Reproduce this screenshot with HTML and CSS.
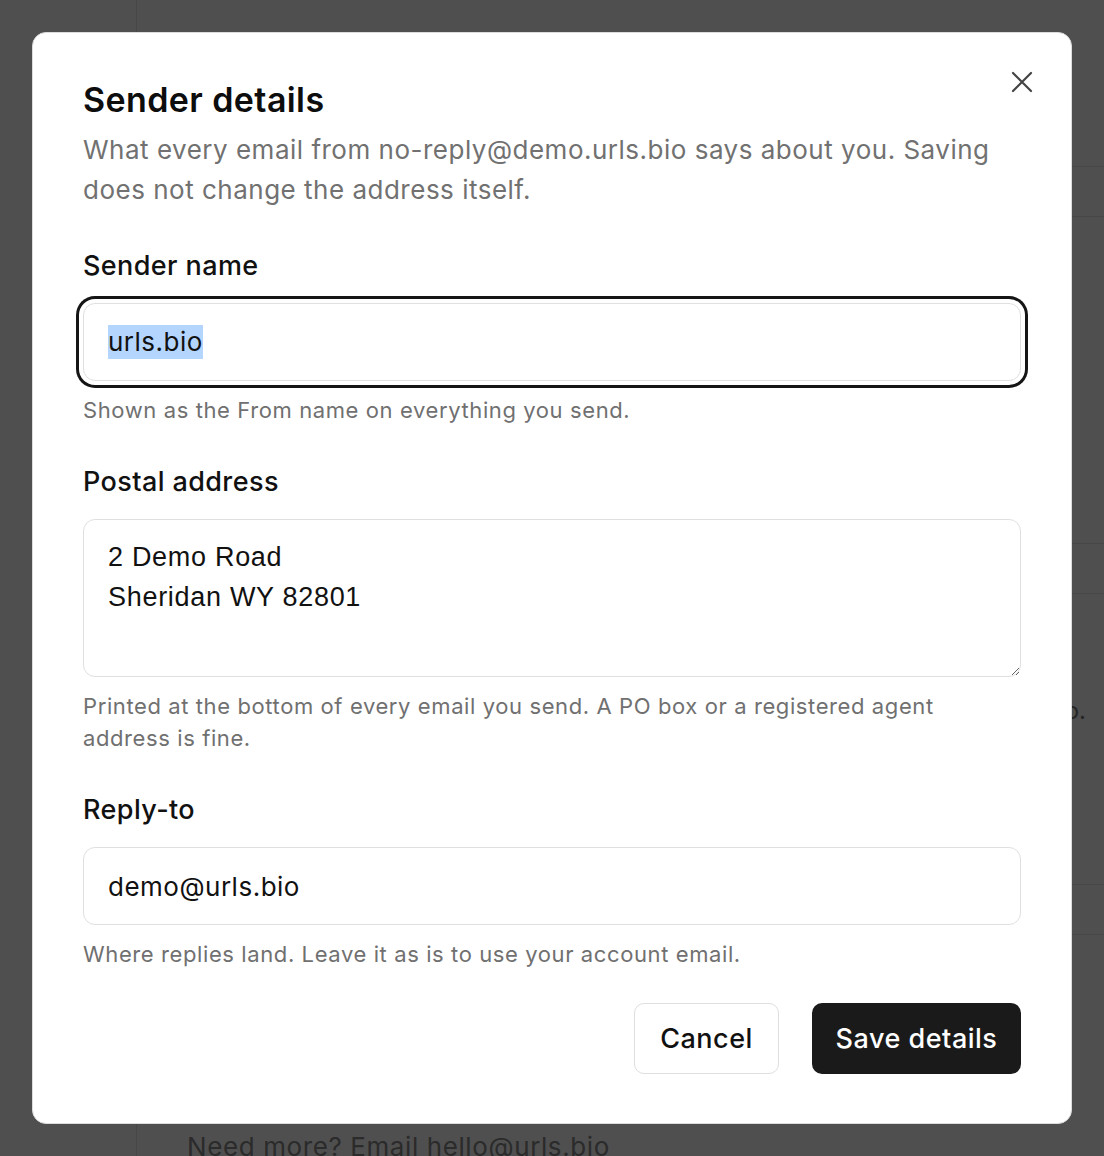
FILE: index.html
```html
<!DOCTYPE html>
<html lang="en">
<head>
<meta charset="utf-8">
<title>Sender details</title>
<link rel="stylesheet" href="styles.css">
</head>
<body>
<div class="page">
  <aside class="sidebar"></aside>
  <main class="main">
    <div class="row row-top"></div>
    <div class="row row-thin"></div>
    <div class="row row-big"></div>
    <div class="row row-thin"></div>
    <div class="row row-mid"><p class="row-note">urls.bio.</p></div>
    <div class="row row-thin"></div>
    <div class="row row-foot"><p class="foot-note">Need more? Email hello@urls.bio</p></div>
  </main>
</div>
<div class="overlay"></div>
<div class="modal" role="dialog" aria-labelledby="dlg-title">
  <button class="close" aria-label="Close">
    <svg width="22" height="22" viewBox="0 0 22 22" fill="none" stroke="#444" stroke-width="2.2" stroke-linecap="round"><path d="M2 2 L20 20 M20 2 L2 20"/></svg>
  </button>
  <h1 id="dlg-title" class="title">Sender details</h1>
  <p class="subtitle">What every email from no-reply@demo.urls.bio says about you. Saving does not change the address itself.</p>

  <div class="field">
    <label class="label">Sender name</label>
    <div class="input focused"><span class="sel">urls.bio</span></div>
    <p class="help">Shown as the From name on everything you send.</p>
  </div>

  <div class="field">
    <label class="label" for="addr">Postal address</label>
    <textarea id="addr" class="textarea" readonly>2 Demo Road
Sheridan WY 82801</textarea>
    <p class="help">Printed at the bottom of every email you send. A PO box or a registered agent address is fine.</p>
  </div>

  <div class="field">
    <label class="label" for="reply">Reply-to</label>
    <input id="reply" class="input" type="text" value="demo@urls.bio" readonly>
    <p class="help">Where replies land. Leave it as is to use your account email.</p>
  </div>

  <div class="actions">
    <button class="btn btn-secondary">Cancel</button>
    <button class="btn btn-primary">Save details</button>
  </div>
</div>
</body>
</html>
```
FILE: styles.css
```css
* { box-sizing: border-box; }
html, body { margin: 0; padding: 0; }
body {
  font-family: Inter, "Noto Sans", sans-serif;
  background: #fff;
  color: #111;
  width: 1104px;
  height: 1156px;
  overflow: hidden;
}
.page {
  display: flex;
  min-height: 1156px;
}
.sidebar {
  width: 137px;
  border-right: 1px solid #e6e6e6;
  flex: none;
}
.main {
  flex: 1;
  display: flex;
  flex-direction: column;
}
.row { border-bottom: 1px solid #e6e6e6; }
.row-top { height: 167px; }
.row-thin { height: 50px; }
.row-big { height: 327px; }
.row-mid { height: 291px; display: flex; align-items: flex-start; justify-content: flex-end; padding: 100px 18px 0 0; }
.row-note { margin: 0; font-size: 24px; line-height: 34px; color: #777; }
.row-foot { border-bottom: 0; padding: 195px 0 0 50px; }
.foot-note { margin: 0; font-size: 26px; line-height: 34px; color: #8a8a8a; letter-spacing: 0.6px; }

.overlay {
  position: fixed;
  inset: 0;
  background: rgba(0, 0, 0, 0.69);
}
.modal {
  position: fixed;
  left: 32px;
  top: 32px;
  width: 1040px;
  height: 1092px;
  background: #fff;
  border: 1px solid #dcdcdc;
  border-radius: 14px;
  padding: 47px 50px 50px 50px;
  display: flex;
  flex-direction: column;
}
.close {
  position: absolute;
  top: 38px;
  right: 38px;
  width: 22px;
  height: 22px;
  padding: 0;
  border: 0;
  background: none;
  display: flex;
}
.title {
  margin: 0;
  font-size: 34px;
  line-height: 40px;
  font-weight: 600;
  letter-spacing: 0.4px;
  color: #0d0d0d;
}
.subtitle {
  margin: 10px 0 0;
  font-size: 26px;
  line-height: 40px;
  color: #717171;
  letter-spacing: 0.5px;
}
.field {
  margin-top: 38px;
  display: flex;
  flex-direction: column;
}
.label {
  font-size: 27px;
  line-height: 36px;
  font-weight: 500;
  color: #111;
  letter-spacing: 0.4px;
  margin-bottom: 19px;
}
.input {
  height: 78px;
  width: 100%;
  border: 1px solid #e0e0e0;
  border-radius: 12px;
  padding: 0 24px;
  font-family: Inter, "Noto Sans", sans-serif;
  font-size: 26px;
  letter-spacing: 0.5px;
  color: #111;
  background: #fff;
  display: flex;
  align-items: center;
  outline: none;
}
.input.focused {
  box-shadow: 0 0 0 4px #fff, 0 0 0 7px #151515;
}
.sel {
  background: #b4d5fe;
  line-height: 34px;
}
.textarea {
  height: 158px;
  width: 100%;
  border: 1px solid #e0e0e0;
  border-radius: 12px;
  padding: 17px 24px 16px;
  font-family: "Liberation Sans", Arial, sans-serif;
  font-size: 27px;
  letter-spacing: 0.7px;
  line-height: 40px;
  color: #111;
  resize: vertical;
  outline: none;
  display: block;
}
.help {
  margin: 13px 0 0;
  font-size: 22px;
  line-height: 32px;
  letter-spacing: 0.6px;
  color: #707070;
}
.actions {
  margin-top: 33px;
  display: flex;
  justify-content: flex-end;
  gap: 33px;
}
.btn {
  height: 71px;
  border-radius: 10px;
  font-family: Inter, "Noto Sans", sans-serif;
  font-size: 27px;
  font-weight: 500;
  letter-spacing: 0.5px;
  padding: 0 20px;
}
.btn-secondary {
  background: #fff;
  border: 1.5px solid #dedede;
  color: #111;
  width: 145px;
}
.btn-primary {
  background: #1a1a1a;
  border: 0;
  color: #fff;
  width: 209px;
}
```
